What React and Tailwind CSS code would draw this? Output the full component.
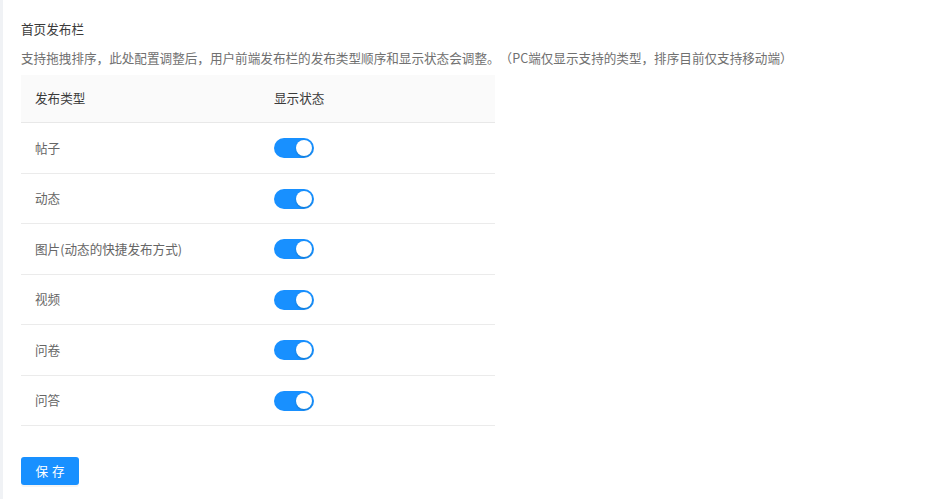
import { useState } from "react";

const postTypes = [
  "帖子",
  "动态",
  "图片(动态的快捷发布方式)",
  "视频",
  "问卷",
  "问答",
];

function Switch({ checked, onChange }) {
  return (
    <button
      onClick={() => onChange(!checked)}
      className={`flex items-center w-[40px] h-[20px] rounded-full p-[2px] ${
        checked ? "bg-[#1890ff] justify-end" : "bg-[#bfbfbf] justify-start"
      }`}
    >
      <span className="block w-[16px] h-[16px] rounded-full bg-white shadow-[0_1px_2px_rgba(0,35,11,0.2)]" />
    </button>
  );
}

export default function App() {
  const [enabled, setEnabled] = useState(postTypes.map(() => true));

  return (
    <div
      className="flex min-h-[499px] bg-white text-[12.6px] [text-spacing-trim:space-all]"
      style={{ fontFamily: '"Noto Sans CJK SC", "Noto Sans", sans-serif' }}
    >
      <div className="w-[3px] bg-[#f0f2f5]" />
      <div className="flex-1 pl-[18px] pt-[20px]">
        <h3 className="leading-[17px] text-[#3a3a3a]">首页发布栏</h3>
        <p className="mt-[11.5px] leading-[17px] text-[#707070]">
          支持拖拽排序，此处配置调整后，用户前端发布栏的发布类型顺序和显示状态会调整。（PC端仅显示支持的类型，排序目前仅支持移动端）
        </p>

        <div className="mt-[9.5px] w-[474px]">
          <div className="flex items-center h-[48px] bg-[#fafafa] border-b border-[#e8e8e8] text-[#3a3a3a]">
            <div className="w-[239px] px-[14px]">发布类型</div>
            <div className="flex-1 px-[14px]">显示状态</div>
          </div>
          {postTypes.map((name, i) => (
            <div
              key={name}
              className="flex items-center h-[50.5px] pt-[1px] border-b border-[#ebebeb] text-[#666]"
            >
              <div className="w-[239px] px-[14px]">{name}</div>
              <div className="flex-1 px-[14px]">
                <Switch
                  checked={enabled[i]}
                  onChange={(v) => {
                    const next = [...enabled];
                    next[i] = v;
                    setEnabled(next);
                  }}
                />
              </div>
            </div>
          ))}
        </div>

        <button className="mt-[31px] w-[58px] h-[28px] rounded-[3px] bg-[#1890ff] text-white tracking-[4px] pl-[4px] shadow-[0_2px_0_rgba(0,0,0,0.045)]">
          保存
        </button>
      </div>
    </div>
  );
}
